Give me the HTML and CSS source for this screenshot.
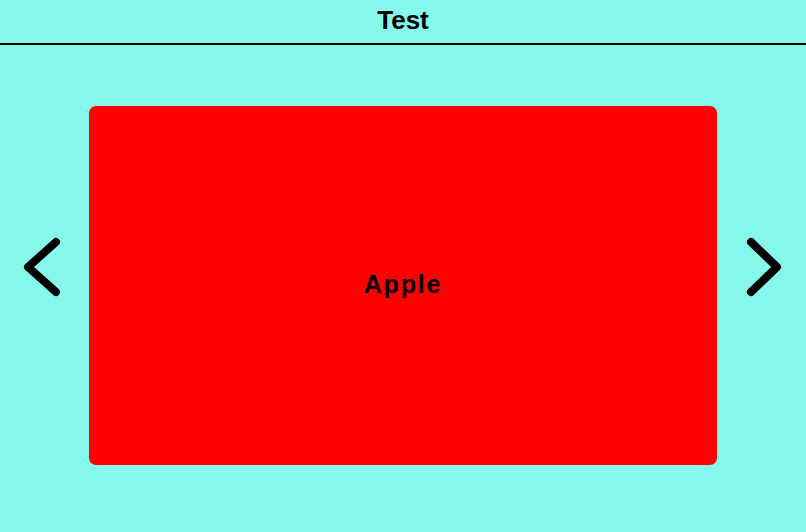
FILE: index.html
```html
<!DOCTYPE html>
<html>
<head>
<meta charset="utf-8">
<link rel="stylesheet" href="styles.css">
</head>
<body>
<header class="header"><h1 class="title">Test</h1></header>
<main class="carousel">
  <button class="nav nav-prev" aria-label="Previous">
    <svg width="44" height="64" viewBox="0 0 44 64"><path d="M36 6 L8 31 L36 56" fill="none" stroke="#000" stroke-width="8" stroke-linecap="round" stroke-linejoin="round"/></svg>
  </button>
  <div class="card"><span class="card-label">Apple</span></div>
  <button class="nav nav-next" aria-label="Next">
    <svg width="44" height="64" viewBox="0 0 44 64"><path d="M10 6 L36 31 L10 56" fill="none" stroke="#000" stroke-width="8" stroke-linecap="round" stroke-linejoin="round"/></svg>
  </button>
</main>
</body>
</html>
```
FILE: styles.css
```css
html, body {
  margin: 0;
  padding: 0;
}
body {
  width: 806px;
  height: 532px;
  background: #85f8eb;
  font-family: "Liberation Sans", Arial, sans-serif;
  overflow: hidden;
}
.header {
  height: 43px;
  border-bottom: 2px solid #000;
  display: flex;
  align-items: center;
  justify-content: center;
}
.title {
  margin: 0;
  font-size: 26px;
  font-weight: bold;
  color: #000;
  line-height: 1;
  margin-top: -4px;
}
.carousel {
  display: flex;
  align-items: flex-start;
}
.nav {
  background: none;
  border: 0;
  padding: 0;
  margin-top: 191px;
  width: 89px;
  display: flex;
  justify-content: flex-start;
  box-sizing: border-box;
}
.nav svg { display: block; }
.nav-prev { padding-left: 20px; }
.nav-next { padding-left: 24px; }
.card {
  margin-top: 61px;
  width: 628px;
  height: 359px;
  background: #ff0000;
  border-radius: 7px;
  display: flex;
  align-items: center;
  justify-content: center;
}
.card-label {
  font-size: 25px;
  font-weight: bold;
  letter-spacing: 1.8px;
  color: #000;
  margin-top: -2px;
}
```
